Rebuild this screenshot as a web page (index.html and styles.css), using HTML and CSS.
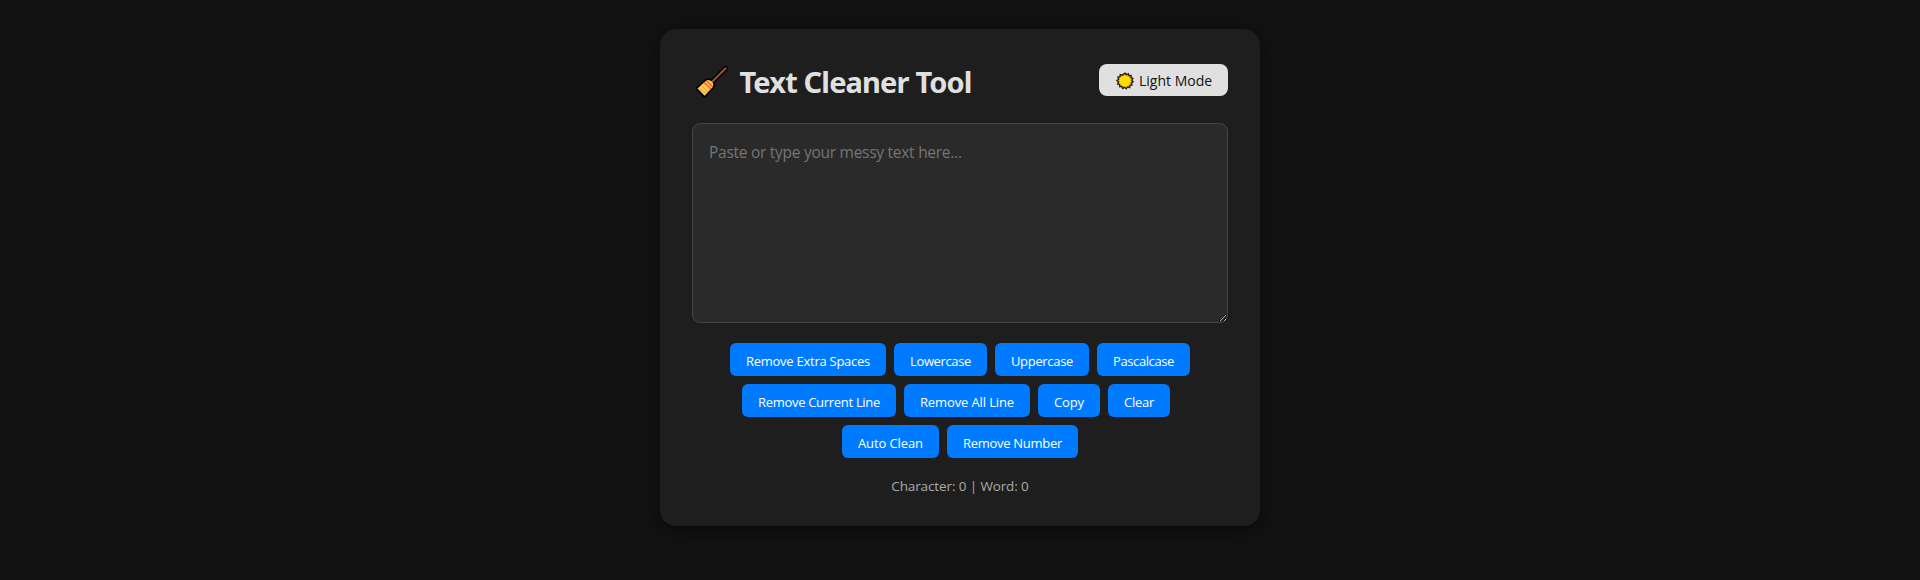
FILE: index.html
```html
<!DOCTYPE html>
<html lang="en">
<head>
<meta charset="utf-8">
<title>Text Cleaner Tool</title>
<link rel="stylesheet" href="styles.css">
</head>
<body>
<main class="container">
  <header class="header">
    <h1 class="title">
      <svg class="broom" viewBox="0 0 34 34">
        <path d="M30.7 3.3 16.5 17.5" stroke="#000" stroke-width="5" stroke-linecap="round"/>
        <path d="M11 15.5Q14.2 13.6 17 16.3Q19.6 19.1 18.1 22L9.6 31.2 2 23.5Z" fill="#000" stroke="#000" stroke-width="3" stroke-linejoin="round"/>
        <path d="M30.7 3.3 16.5 17.5" stroke="#8b5431" stroke-width="2.2" stroke-linecap="round"/>
        <path d="M11 15.8Q14.2 14 16.6 16.6Q19.3 19.2 17.8 22L9.6 30.8 2.5 23.6Z" fill="#fcc755"/>
        <path d="M4.5 23.5l7 5M7 21l6 6" stroke="#e5a035" stroke-width=".8"/>
        <path d="M9 17.3Q12.5 20.5 16 24.2M11.5 15.8Q15 18.8 17.7 22" fill="none" stroke="#f1602b" stroke-width="1.4"/>
      </svg>
      <span>Text Cleaner Tool</span>
    </h1>
    <button class="mode">
      <svg class="sun" viewBox="0 0 18 18">
        <polygon points="9,1 10.4,2.7 12.3,1.6 13,3.7 15.2,3.4 15,5.6 17,6.3 15.8,8.2 17.3,9.8 15.4,11 16.1,13.1 13.9,13.4 13.7,15.7 11.6,15 10.2,16.9 8.6,15.3 6.7,16.5 5.9,14.4 3.7,14.7 3.7,12.5 1.5,12 2.5,10 .8,8.5 2.7,7.2 1.8,5.1 4,4.6 4.2,2.4 6.4,3" fill="#e99a00" stroke="#151515" stroke-width="1.2"/>
        <circle cx="9" cy="9" r="5.6" fill="#ffde00"/>
      </svg>
      <span>Light Mode</span>
    </button>
  </header>
  <textarea class="input" placeholder="Paste or type your messy text here..."></textarea>
  <div class="buttons">
    <button class="btn extra">Remove Extra Spaces</button>
    <button class="btn lower">Lowercase</button>
    <button class="btn upper">Uppercase</button>
    <button class="btn pascal">Pascalcase</button>
    <button class="btn current">Remove Current Line</button>
    <button class="btn all">Remove All Line</button>
    <button class="btn copy">Copy</button>
    <button class="btn clear">Clear</button>
    <button class="btn auto">Auto Clean</button>
    <button class="btn number">Remove Number</button>
  </div>
  <p class="stats">Character: 0 | Word: 0</p>
</main>
</body>
</html>
```
FILE: styles.css
```css
* { box-sizing: border-box; }
body {
  margin: 0;
  min-height: 580px;
  padding-top: 29px;
  background: #121212;
  color: #e0e0e0;
  font-family: "Open Sans", "Noto Sans", sans-serif;
}
button { font-family: inherit; border: 0; white-space: nowrap; }
.container {
  width: 600px;
  height: 497px;
  margin: 0 auto;
  padding: 32px;
  border-radius: 16px;
  background: #1e1e1e;
  box-shadow: 0 4px 20px rgba(0, 0, 0, .5);
}
.header {
  display: flex;
  justify-content: space-between;
  align-items: flex-start;
  height: 62px;
}
.title {
  display: flex;
  align-items: flex-start;
  gap: 10.5px;
  margin: 0;
  padding: 3px 0 0 3px;
  font: 700 29px/34px "Noto Sans", sans-serif;
  letter-spacing: -.85px;
  white-space: nowrap;
}
.broom { width: 34px; height: 34px; margin-top: 1px; fill: none; }
.title span { padding-top: 1px; }
.mode {
  display: flex;
  align-items: center;
  gap: 5px;
  width: 129px;
  height: 32px;
  margin-top: 3px;
  padding: 0 0 0 17px;
  border-radius: 8px;
  background: #e0e0e0;
  color: #121212;
  font-size: 14px;
}
.sun { width: 18px; height: 18px; margin-top: 2px; }
.mode span { padding-top: 1px; }
.input {
  display: block;
  width: 536px;
  height: 200px;
  padding: 16px;
  border: 1px solid #444;
  border-radius: 8px;
  background: #2a2a2a;
  color: #e0e0e0;
  font: 15.5px/24px "Open Sans", sans-serif;
  letter-spacing: -.27px;
  resize: vertical;
}
.input::placeholder { color: #757575; }
.buttons {
  display: flex;
  flex-wrap: wrap;
  justify-content: center;
  gap: 8px;
  margin: 20px 0 0;
}
.btn {
  height: 33px;
  padding: 2px 0 0;
  border-radius: 6px;
  background: #007bff;
  color: #fff;
  font-size: 13px;
  font-weight: 500;
}
.extra { width: 156px; letter-spacing: -.26px; }
.lower { width: 93px; letter-spacing: -.36px; }
.upper { width: 94px; letter-spacing: -.32px; }
.pascal { width: 93px; letter-spacing: -.4px; }
.current { width: 154px; letter-spacing: -.3px; }
.all { width: 126px; letter-spacing: -.12px; }
.copy { width: 62px; letter-spacing: -.12px; }
.clear { width: 62px; margin-right: 8px; letter-spacing: -.26px; }
.auto { width: 97px; letter-spacing: -.1px; }
.number { width: 131px; letter-spacing: -.28px; }
.stats {
  margin: 16px 0 0;
  color: #aaa;
  font-size: 13.5px;
  line-height: 24px;
  letter-spacing: -.12px;
  text-align: center;
}
```
